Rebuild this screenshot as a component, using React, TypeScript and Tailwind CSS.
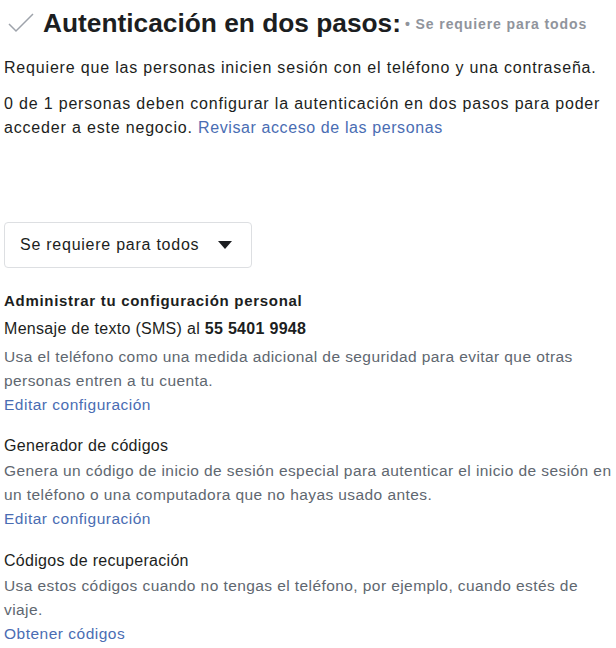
import React from "react";

const Option = ({
  title,
  desc,
  link,
  first = false,
}: {
  title: React.ReactNode;
  desc: string;
  link: string;
  first?: boolean;
}) => (
  <div>
    <div className="text-[16px] leading-[24px] tracking-[0.3px] text-[#1c1e21]">{title}</div>
    <p
      className={`${first ? "mt-[4px]" : "mt-[1px]"} text-[15.5px] leading-[24px] tracking-[0.42px] text-[#606770]`}
    >
      {desc}
    </p>
    <a className="block text-[15.5px] leading-[24px] tracking-[0.5px] text-[#4a6db3]">{link}</a>
  </div>
);

export default function App() {
  return (
    <div
      className="w-[616px] h-[648px] bg-white overflow-hidden pl-[4px] pr-[2px]"
      style={{ fontFamily: '"Liberation Sans", Arial, sans-serif' }}
    >
      {/* Header */}
      <div className="flex items-end h-[44px] pb-[6px]">
        <svg width="28" height="22" viewBox="0 0 28 22" className="ml-[3px] mb-[4px]">
          <path d="M2 12 L9 19 L26 2" fill="none" stroke="#9ea3ab" strokeWidth="1.5" />
        </svg>
        <h1 className="ml-[8px] text-[26.3px] leading-[30px] font-bold text-[#1c1e21]">
          Autenticación en dos pasos:
        </h1>
        <span className="ml-[4px] mb-[3px] text-[14px] tracking-[0.9px] font-bold text-[#90949c] whitespace-nowrap">
          • Se requiere para todos
        </span>
      </div>

      <div className="pr-[6px]">
        <p className="mt-[12px] text-[16px] leading-[24px] tracking-[0.82px] text-[#1c1e21]">
          Requiere que las personas inicien sesión con el teléfono y una contraseña.
        </p>
        <p className="mt-[12px] text-[16px] leading-[24px] tracking-[0.82px] text-[#1c1e21]">
          0 de 1 personas deben configurar la autenticación en dos pasos para poder
          acceder a este negocio.{" "}
          <a className="text-[#4a6db3] tracking-[0.6px]">Revisar acceso de las personas</a>
        </p>
      </div>

      <button className="mt-[82px] flex items-center justify-between w-[248px] h-[46px] pl-[15px] pr-[19px] border border-[#dddfe2] rounded-[4px] text-[16px] tracking-[0.75px] text-[#1c1e21]">
        Se requiere para todos
        <svg width="14" height="8" viewBox="0 0 14 8">
          <path d="M0 0 H14 L7 8 Z" fill="#1c1e21" />
        </svg>
      </button>

      <div className="mt-[21px] text-[15px] leading-[24px] tracking-[0.7px] font-bold text-[#1c1e21]">
        Administrar tu configuración personal
      </div>
      <div className="mt-[4px]">
        <Option
          first
          title={
            <>
              Mensaje de texto (SMS) al <b>55 5401 9948</b>
            </>
          }
          desc="Usa el teléfono como una medida adicional de seguridad para evitar que otras personas entren a tu cuenta."
          link="Editar configuración"
        />
      </div>
      <div className="mt-[17px]">
        <Option
          title="Generador de códigos"
          desc="Genera un código de inicio de sesión especial para autenticar el inicio de sesión en un teléfono o una computadora que no hayas usado antes."
          link="Editar configuración"
        />
      </div>
      <div className="mt-[18px]">
        <Option
          title="Códigos de recuperación"
          desc="Usa estos códigos cuando no tengas el teléfono, por ejemplo, cuando estés de viaje."
          link="Obtener códigos"
        />
      </div>
    </div>
  );
}
